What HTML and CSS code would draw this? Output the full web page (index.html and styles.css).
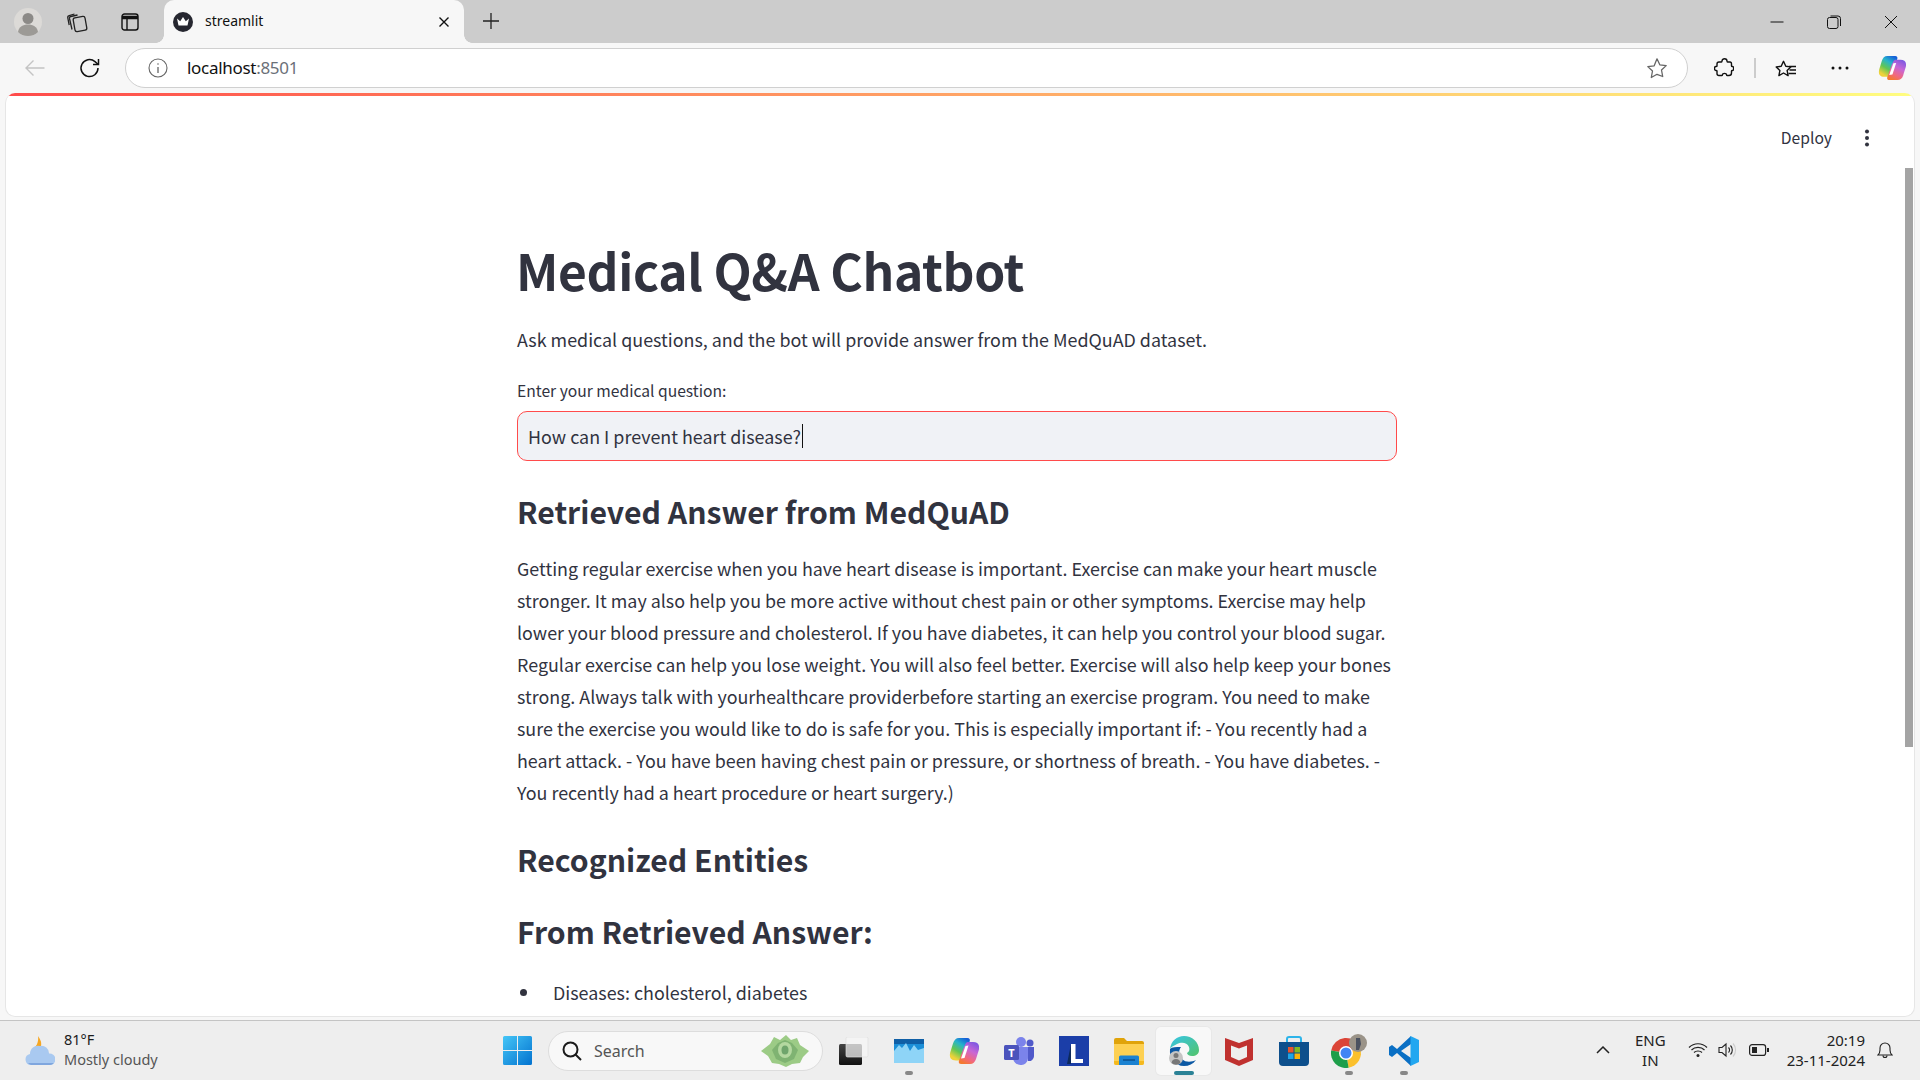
FILE: index.html
```html
<!DOCTYPE html>
<html lang="en">
<head>
<meta charset="utf-8">
<title>streamlit</title>
<link rel="stylesheet" href="styles.css">
</head>
<body>
<div class="tabstrip">
  <div class="strip-left">
    <span class="avatar"><svg width="28" height="28" viewBox="0 0 28 28"><circle cx="14" cy="14" r="14" fill="#dcdad7"/><circle cx="14" cy="10.5" r="5.5" fill="#8c8a87"/><path d="M4 24c1-5.500 5-7.500 10-7.500s9 2 10 7.500c-2.500 2.500-6 4-10 4s-7.500-1.500-10-4z" fill="#9c9a96"/></svg></span>
    <span class="strip-btn"><svg width="22" height="22" viewBox="0 0 22 22" fill="none" stroke="#222" stroke-width="1.300"><rect x="8" y="6" width="12" height="14" rx="2" transform="rotate(-10 14 13)"/><path d="M6 18.500 3.500 7.500c-.2-1 .3-1.800 1.300-2L11.500 4"/><path d="M3.200 14 1.800 7c-.2-1.200.4-2.100 1.400-2.300L8.500 3"/></svg></span>
    <span class="strip-btn"><svg width="18" height="18" viewBox="0 0 18 18" fill="none" stroke="#111" stroke-width="1.400"><rect x="1" y="1" width="16" height="16" rx="2.500"/><path d="M1 4.500h16" stroke-width="3.500"/><path d="M6 5v12"/></svg></span>
  </div>
  <div class="tab">
    <svg class="favicon" width="20" height="20" viewBox="0 0 20 20"><circle cx="10" cy="10" r="10" fill="#262730"/><path d="M4 6.500l3.200 2.700L10 5l2.800 4.200L16 6.500l-1.500 7h-9z" fill="#fff"/></svg>
    <span class="tab-title">streamlit</span>
    <svg class="tab-close" width="12" height="12" viewBox="0 0 12 12" stroke="#111" stroke-width="1.400"><path d="M1.500 1.500l9 9M10.500 1.500l-9 9"/></svg>
  </div>
  <svg class="new-tab" width="18" height="18" viewBox="0 0 18 18" stroke="#222" stroke-width="1.300"><path d="M9 1v16M1 9h16"/></svg>
  <div class="win-btns">
    <svg width="14" height="14" viewBox="0 0 14 14" stroke="#111" stroke-width="1"><path d="M0.500 7h13"/></svg>
    <svg width="14" height="14" viewBox="0 0 14 14" fill="none" stroke="#111" stroke-width="1"><rect x="0.500" y="2.500" width="10.500" height="11" rx="2"/><path d="M3.500 1h7.500a2.500 2.500 0 0 1 2.500 2.500V11"/></svg>
    <svg width="14" height="14" viewBox="0 0 14 14" stroke="#111" stroke-width="1"><path d="M1 1l12 12M13 1L1 13"/></svg>
  </div>
</div>

<div class="toolbar">
  <svg class="tb-back" width="20" height="18" viewBox="0 0 20 18" fill="none" stroke="#c4c4c4" stroke-width="1.400"><path d="M19.500 9H1M8.500 1.500 1 9l7.500 7.500"/></svg>
  <svg class="tb-reload" width="22" height="22" viewBox="0 0 22 22" fill="none" stroke="#111" stroke-width="1.500"><path d="M19 11a8.500 8.500 0 1 1-3-6.400l3 2.600"/><path d="M19.500 2v5.500H14"/></svg>
  <div class="address">
    <svg class="info" width="20" height="20" viewBox="0 0 20 20" fill="none" stroke="#666" stroke-width="1.100"><circle cx="10" cy="10" r="9"/><path d="M10 9v6" stroke-width="1.300"/><circle cx="10" cy="6" r=".8" fill="#666" stroke="none"/></svg>
    <span class="url">localhost<span class="port">:8501</span></span>
    <svg class="star" width="22" height="22" viewBox="0 0 22 22" fill="none" stroke="#666" stroke-width="1.300" stroke-linejoin="round"><path d="M11 1.800l2.800 6 6.400.8-4.700 4.400 1.200 6.500L11 17.300l-5.700 3.200 1.200-6.500-4.700-4.400 6.400-.8z"/></svg>
  </div>
  <svg class="tb-ext" width="20" height="20" viewBox="0 0 20 20" fill="none" stroke="#111" stroke-width="1.400" stroke-linejoin="round"><path d="M8 3c0-3 5-3 5 0 0 .7 0 1 .5 1H16c1 0 1.500 1 1.500 2v2c0 .5.500.5 1 .5 1.500 0 1.500 4 0 4-.5 0-1 0-1 .5v2c0 1.500-1 2.500-2.500 2.500h-2c-.5 0-.5-.5-.5-1 0-1.500-4-1.500-4 0 0 .5 0 1-.5 1H5c-1 0-2-1-2-2v-2.500c0-.5-.5-.5-1-.5-2 0-2-4 0-4 .5 0 1 0 1-.5V6c0-1 1-2 2-2h2.500C8 4 8 3.500 8 3z"/></svg>
  <span class="tb-divider"></span>
  <svg class="tb-fav" width="22" height="22" viewBox="0 0 22 22" fill="none" stroke="#111" stroke-width="1.400" stroke-linejoin="round"><path d="M9.500 1.800l2.300 5 5 .6-3.700 3.500 1 5.200-4.600-2.600-4.600 2.600 1-5.200L2.200 7.400l5-.6z" transform="translate(-1 2.500)"/><path d="M14 9.500h7M14.500 13h6.500M13.500 16.500H21"/></svg>
  <svg class="tb-more" width="18" height="4" viewBox="0 0 18 4" fill="#111"><circle cx="2" cy="2" r="1.500"/><circle cx="9" cy="2" r="1.500"/><circle cx="16" cy="2" r="1.500"/></svg>
  <svg class="tb-copilot" width="28" height="26" viewBox="0 0 30 28"><use href="#copilot"/></svg>
</div>

<main class="page">
  <div class="decoration"></div>
  <div class="st-header">
    <span class="deploy">Deploy</span>
    <svg class="kebab" width="6" height="18" viewBox="0 0 6 18" fill="#31333f"><circle cx="3" cy="2.500" r="2"/><circle cx="3" cy="9" r="2"/><circle cx="3" cy="15.500" r="2"/></svg>
  </div>
  <div class="scrollbar"></div>
  <div class="block">
    <h1>Medical Q&amp;A Chatbot</h1>
    <p class="desc">Ask medical questions, and the bot will provide answer from the MedQuAD dataset.</p>
    <label class="q-label" for="q">Enter your medical question:</label>
    <div class="q-input" id="q"><span>How can I prevent heart disease?</span><i class="caret"></i></div>
    <h2 class="h-answer">Retrieved Answer from MedQuAD</h2>
    <p class="answer">Getting regular exercise when you have heart disease is important. Exercise can make your heart muscle<br>stronger. It may also help you be more active without chest pain or other symptoms. Exercise may help<br>lower your blood pressure and cholesterol. If you have diabetes, it can help you control your blood sugar.<br>Regular exercise can help you lose weight. You will also feel better. Exercise will also help keep your bones<br>strong. Always talk with yourhealthcare providerbefore starting an exercise program. You need to make<br>sure the exercise you would like to do is safe for you. This is especially important if: - You recently had a<br>heart attack. - You have been having chest pain or pressure, or shortness of breath. - You have diabetes. -<br>You recently had a heart procedure or heart surgery.)</p>
    <h2 class="h-ent">Recognized Entities</h2>
    <h2 class="h-from">From Retrieved Answer:</h2>
    <ul class="ents"><li>Diseases: cholesterol, diabetes</li></ul>
  </div>
</main>

<footer class="taskbar">
  <div class="weather">
    <svg width="30" height="30" viewBox="0 0 30 30"><path d="M13 0c2 3 4 6 3 10-1 3-6 5-9 3 4-1 7-7 6-13z" fill="#f5a623"/><path d="M6 29a5.500 5.500 0 0 1-1-10.900A8 8 0 0 1 15 10a7.500 7.500 0 0 1 9 7.500 5.800 5.800 0 0 1 1.500 11.500z" fill="#a9c9f0"/><path d="M6 29a5.500 5.500 0 0 1-3-2h26a5.800 5.800 0 0 1-4 2z" fill="#7fa6de"/></svg>
    <div class="weather-text"><span>81°F</span><span class="muted">Mostly cloudy</span></div>
  </div>
  <svg class="win-logo" width="29" height="29" viewBox="0 0 29 29"><defs><linearGradient id="w" x1="0" y1="0" x2="1" y2="1"><stop offset="0" stop-color="#45c6f7"/><stop offset="1" stop-color="#0272cf"/></linearGradient></defs><path d="M0 1.500A1.500 1.500 0 0 1 1.500 0H14v14H0zM15 0h12.500A1.500 1.500 0 0 1 29 1.500V14H15zM0 15h14v14H1.500A1.500 1.500 0 0 1 0 27.500zM15 15h14v12.500a1.500 1.500 0 0 1-1.500 1.500H15z" fill="url(#w)"/></svg>
  <div class="search">
    <svg width="20" height="20" viewBox="0 0 20 20" fill="none" stroke="#1b1b1b" stroke-width="2"><circle cx="8.500" cy="8.500" r="7"/><path d="M13.500 13.500 19 19"/></svg>
    <span>Search</span>
    <svg class="flower" width="50" height="32" viewBox="0 0 50 32"><path d="M1 16 10 9l4-7 6 3 6-5 5 5 6-2 3 7 9 6-6 6-3 6-8 1-6 3-7-3-7-1-4-7z" fill="#9ccb86"/><path d="M12 15l6-7 7-3 7 3 6 7-4 9-9 4-9-4z" fill="#7fb372"/><ellipse cx="25" cy="15" rx="7" ry="8" fill="#b4d8a0"/><ellipse cx="25" cy="15" rx="3.500" ry="4.500" fill="#6fa56c"/></svg>
  </div>
  <div class="apps">
    <span class="app app-first"><svg width="30" height="28" viewBox="0 0 30 28"><defs><linearGradient id="d1" x1="0" y1="0" x2="0" y2="1"><stop offset="0" stop-color="#444"/><stop offset="1" stop-color="#111"/></linearGradient></defs><rect x="0" y="7" width="23" height="21" rx="1.500" fill="url(#d1)"/><rect x="7" y="0" width="22" height="20" rx="1.500" fill="#f6f6f6" fill-opacity=".72" stroke="#dedede" stroke-width=".7"/></svg></span>
    <span class="app running"><svg width="30" height="24" viewBox="0 0 30 24"><rect width="30" height="24" fill="#a8def7"/><rect width="30" height="15" fill="#1b8fd8"/><rect width="30" height="5" fill="#0f5fa6"/><path d="M0 12l5-6 3 3 4-5 4 8 4-6 4 5 6-2v15H0z" fill="#8ed4f7"/></svg></span>
    <span class="app"><svg width="30" height="28" viewBox="0 0 30 28"><defs><linearGradient id="c1" x1=".75" y1="0" x2=".2" y2="1"><stop offset="0" stop-color="#1560d8"/><stop offset=".3" stop-color="#26b4cc"/><stop offset=".6" stop-color="#62c653"/><stop offset=".9" stop-color="#efd23a"/></linearGradient><linearGradient id="c2" x1=".8" y1="0" x2=".3" y2="1"><stop offset="0" stop-color="#7a58e2"/><stop offset=".4" stop-color="#c866d6"/><stop offset=".75" stop-color="#f2687e"/><stop offset="1" stop-color="#f4792f"/></linearGradient></defs><g id="copilot"><path d="M10 1h8.500c2 0 2.800 1.500 2.200 3.200L16 17l-2.500 5c-.6 1-1.500 1.500-2.800 1.500H7C2 23.500 0 20.500 1.200 15.500L4 6.500C5 3 7 1 10 1z" fill="url(#c1)"/><path d="M21 27h-9c-2 0-2.600-1.500-2-3.200l5-13.800 2-4c.6-.8 1.400-1 2.500-1H24c5 0 7 3 5.800 8l-2.800 9c-1 3-3 5-6 5z" fill="url(#c2)"/><path d="M19.500 8.500l-3 .5-4.500 12.500 3.500-.5z" fill="#fff"/></g></svg></span>
    <span class="app"><svg width="30" height="28" viewBox="0 0 30 28"><circle cx="17" cy="5" r="5" fill="#7b83eb"/><circle cx="26" cy="6" r="3.500" fill="#5059c9"/><path d="M22 10h8v9a5 5 0 0 1-6 5z" fill="#5059c9"/><path d="M9 10h15v11a7 7 0 0 1-7.500 7A7.500 7.500 0 0 1 9 21z" fill="#7b83eb"/><rect y="8" width="15" height="15" rx="1.500" fill="#4b53bc"/><text x="7.500" y="20" class="teams-t">T</text></svg></span>
    <span class="app"><svg width="30" height="30" viewBox="0 0 30 30"><rect width="30" height="30" fill="#1b3ea8"/><path d="M8 28 12 8v20z" fill="#0d2a5c"/><path d="M12 8h4.500v15H24v4H12z" fill="#fff"/></svg></span>
    <span class="app"><svg width="30" height="28" viewBox="0 0 30 28"><path d="M0 3a2 2 0 0 1 2-2h8l3 3h15a2 2 0 0 1 2 2v4H0z" fill="#e0a30a"/><path d="M0 7h30v19a2 2 0 0 1-2 2H2a2 2 0 0 1-2-2z" fill="#fdd052"/><path d="M0 24h30v2a2 2 0 0 1-2 2H2a2 2 0 0 1-2-2z" fill="#f5b91e"/><path d="M5 20a1.500 1.500 0 0 1 1.500-1.500h17A1.500 1.500 0 0 1 25 20v8H5z" fill="#1b82d1"/><path d="M9 23h12" stroke="#0d4f8c" stroke-width="1.500"/></svg></span>
    <span class="app active"><svg width="30" height="30" viewBox="0 0 30 30"><defs><linearGradient id="e1" x1="0" y1="0" x2="1" y2="1"><stop offset="0" stop-color="#36c5e8"/><stop offset="1" stop-color="#53c46a"/></linearGradient></defs><path d="M1 13C2 5 8 0 15 0c8 0 15 6 15 14 0 4-3 6-7 6-3 0-5-2-5-3 2-1 3-3 2-6-2-5-8-5-12-3-3 1.500-6 3-7 5z" fill="url(#e1)"/><path d="M1 13c-1 9 5 17 14 17 5 0 9-2 12-6-4 2-10 3-14-1-3-3-4-8-1-12-5 0-9 0-11 2z" fill="#0c59a4"/><circle cx="7" cy="22" r="7" fill="#c4c4c4"/><circle cx="7" cy="19.500" r="2.500" fill="#777"/><path d="M2.500 27c.5-3 2-4 4.500-4s4 1 4.500 4a7 7 0 0 1-9 0z" fill="#777"/></svg></span>
    <span class="app"><svg width="28" height="30" viewBox="0 0 28 30"><path d="M0 2l14 5 14-5v22l-14 6-14-6z" fill="#c0312f"/><path d="M6 9.500l8 3 8-3v11.500l-8 3.500L6 21z" fill="#eee"/></svg></span>
    <span class="app"><svg width="30" height="30" viewBox="0 0 30 30"><path d="M8 6V3a2 2 0 0 1 2-2h10a2 2 0 0 1 2 2v3" fill="none" stroke="#2cb4ea" stroke-width="2"/><path d="M0 6h30v20a4 4 0 0 1-4 4H4a4 4 0 0 1-4-4z" fill="#0d4f8c"/><rect x="9" y="11" width="5.500" height="5.500" fill="#e8532b"/><rect x="15.500" y="11" width="5.500" height="5.500" fill="#7fb822"/><rect x="9" y="17.500" width="5.500" height="5.500" fill="#1fa5e6"/><rect x="15.500" y="17.500" width="5.500" height="5.500" fill="#fbb40a"/></svg></span>
    <span class="app running"><svg width="36" height="34" viewBox="0 0 36 34"><path d="M15 19L.2 16.400A15 15 0 0 1 29.100 13.900z" fill="#db4437"/><path d="M15 19l14.100-5.100A15 15 0 0 1 17.600 33.800z" fill="#fbc02d"/><path d="M15 19l2.600 14.800A15 15 0 0 1 .2 16.400z" fill="#1e9e4a"/><circle cx="15" cy="19" r="7" fill="#fff"/><circle cx="15" cy="19" r="5.500" fill="#4285f4"/><circle cx="27" cy="9" r="9" fill="#9a9388"/><path d="M25 4h4l1 6-2 6h-3z" fill="#4a5160"/></svg></span>
    <span class="app running"><svg width="30" height="30" viewBox="0 0 30 30"><path d="M22 0 8 13 3 9 0 11v8l3 2 5-4 14 13v-8l-10-7 10-7z" fill="#0a6fc4"/><path d="M21.500 0 30 4v22l-8.500 4z" fill="#22a7f0"/></svg></span>
  </div>
  <div class="tray">
    <svg width="14" height="8" viewBox="0 0 14 8" fill="none" stroke="#222" stroke-width="1.500"><path d="M1 7l6-6 6 6"/></svg>
    <div class="lang"><span>ENG</span><span>IN</span></div>
    <svg class="wifi" width="20" height="16" viewBox="0 0 20 16" fill="none" stroke="#222" stroke-width="1.200"><path d="M1 5.500c5-5 13-5 18 0M3.500 8c3.500-3.500 9.500-3.500 13 0M6 10.500c2-2 6-2 8 0"/><circle cx="10" cy="13.500" r="1.500" fill="#222" stroke="none"/></svg>
    <svg class="speaker" width="20" height="16" viewBox="0 0 20 16" fill="none" stroke="#222" stroke-width="1.100"><path d="M1 5.500h3L8 2v12l-4-3.500H1z"/><path d="M10.500 5.500a3.500 3.500 0 0 1 0 5M12.500 3.500a6.500 6.500 0 0 1 0 9"/><path d="M15 1.500a9.500 9.500 0 0 1 0 13" stroke="#ccc"/></svg>
    <svg class="battery" width="20" height="12" viewBox="0 0 20 12" fill="none" stroke="#222" stroke-width="1.200"><rect x=".6" y=".6" width="16" height="10.800" rx="2.500"/><rect x="3" y="3" width="5" height="6" fill="#222" stroke="none"/><rect x="18" y="4" width="2" height="4" fill="#222" stroke="none"/></svg>
    <div class="clock"><span>20:19</span><span>23-11-2024</span></div>
    <svg class="bell" width="16" height="18" viewBox="0 0 16 18" fill="none" stroke="#222" stroke-width="1.100"><path d="M1 14c1.500-1.500 2-3 2-5V7a5 5 0 0 1 10 0v2c0 2 .5 3.500 2 5z"/><path d="M6 14.500a2 2 0 0 0 4 0"/></svg>
  </div>
</footer>
</body>
</html>
```
FILE: styles.css
```css
* { box-sizing: border-box; }
html, body { margin: 0; padding: 0; width: 1920px; height: 1080px; overflow: hidden; }
body { display: flex; flex-direction: column; background: #f7f7f7; font-family: "Open Sans", "Noto Sans", sans-serif; color: #1b1b1b; }
svg { display: block; flex: none; }

/* Tab strip */
.tabstrip { height: 43px; flex: none; background: #cccccc; display: flex; align-items: center; }
.strip-left { width: 164px; flex: none; display: flex; align-items: center; padding-left: 14px; }
.avatar { width: 28px; height: 28px; }
.strip-btn { width: 22px; height: 22px; display: flex; align-items: center; justify-content: center; }
.avatar + .strip-btn { margin-left: 24px; }
.strip-btn + .strip-btn { margin-left: 31px; }
.tab { position: relative; width: 300px; height: 43px; background: #f7f7f7; border-radius: 10px 10px 0 0; display: flex; align-items: center; padding-left: 9px; padding-right: 14px; }
.tab::before, .tab::after { content: ""; position: absolute; bottom: 0; width: 8px; height: 8px; }
.tab::before { left: -8px; background: radial-gradient(circle at 0 0, transparent 7.500px, #f7f7f7 8px); }
.tab::after { right: -8px; background: radial-gradient(circle at 100% 0, transparent 7.500px, #f7f7f7 8px); }
.tab-title { margin-left: 12px; font-size: 14px; line-height: 20px; margin-top: -2px; color: #111; flex: 1; font-family: "Noto Sans", sans-serif; }
.new-tab { margin-left: 18px; margin-top: -1px; }
.win-btns { margin-left: auto; display: flex; align-items: center; gap: 43px; padding-right: 22px; }

/* Toolbar */
.toolbar { height: 50px; flex: none; background: #f7f7f7; display: flex; align-items: center; padding-bottom: 1px; }
.tb-back { margin-left: 25px; }
.tb-reload { margin-left: 34px; }
.address { width: 1563px; height: 40px; margin-left: 24px; background: #fff; border: 1px solid #d0d0d0; border-radius: 20px; display: flex; align-items: center; padding-left: 22px; padding-right: 19px; }
.url { margin-left: 19px; font-size: 17px; color: #111; flex: 1; font-family: "Noto Sans", sans-serif; letter-spacing: -.3px; }
.port { color: #6b7078; }
.tb-ext { margin-left: 26px; }
.tb-divider { width: 2px; height: 20px; background: #ccc; margin-left: 20px; }
.tb-fav { margin-left: 19px; }
.tb-more { margin-left: 34px; }
.tb-copilot { margin-left: 29px; }

/* Streamlit page */
.page { position: relative; height: 924px; flex: none; margin: 0 5px; background: #fff; border-radius: 10px; border: 1px solid #e6e6e6; border-top: 0; overflow: hidden; font-family: "Noto Sans CJK JP", "Noto Sans", sans-serif; color: #31333f; }
.decoration { height: 3px; background: linear-gradient(90deg, #ff4b4b, #fffd80); }
.st-header { height: 84px; display: flex; align-items: center; justify-content: flex-end; padding-right: 44px; }
.deploy { font-size: 15.650px; line-height: 24px; }
.kebab { margin-left: 32px; }
.scrollbar { position: absolute; right: 1px; top: 75px; width: 8px; height: 579px; background: #a4a4a4; }
.block { width: 880px; margin: 0 auto 0 511px; }
h1 { margin: 50px 0 0 -1px; font-size: 49.700px; line-height: 78px; font-weight: 700; letter-spacing: -.35px; }
.desc { margin: 15px 0 0; font-size: 17.900px; line-height: 32px; }
.q-label { display: block; margin-top: 24px; font-size: 15.650px; line-height: 24px; }
.q-input { margin-top: 8px; height: 50px; background: #f0f2f6; border: 1px solid #ff4b4b; border-radius: 10px; display: flex; align-items: center; padding-left: 10px; font-size: 17.900px; }
.caret { width: 1px; height: 24px; background: #111; margin-left: 1px; }
h2 { margin: 0; font-size: 30.200px; line-height: 44px; font-weight: 700; }
.h-answer { margin-top: 28px; }
.answer { margin: 19px 0 0; font-size: 17.900px; line-height: 32px; white-space: nowrap; }
.h-ent { margin-top: 29px; }
.h-from { margin-top: 28px; }
.ents { list-style: none; margin: 23px 0 0; padding: 0; font-size: 17.900px; line-height: 32px; }
.ents li { display: flex; align-items: center; }
.ents li::before { content: ""; width: 7px; height: 7px; border-radius: 50%; background: #31333f; margin-left: 3px; margin-right: 26px; }

/* Taskbar */
.taskbar { height: 60px; flex: none; margin-top: 3px; background: #eeeeee; border-top: 1px solid #c4c4c4; display: flex; align-items: center; padding-left: 25px; }
.weather { width: 478px; flex: none; display: flex; align-items: center; gap: 9px; font-size: 14.500px; line-height: 20px; font-family: "Noto Sans", sans-serif; }
.weather-text { display: flex; flex-direction: column; margin-top: -3px; }
.muted { color: #555; }
.search { width: 275px; height: 40px; margin-left: 16px; flex: none; background: #f8f8f8; border: 1px solid #ddd; border-radius: 20px; display: flex; align-items: center; padding-left: 13px; padding-right: 12px; font-size: 16px; color: #555; gap: 12px; font-family: "Noto Sans", sans-serif; }
.flower { margin-left: auto; }
.apps { display: flex; align-items: center; margin-left: 16px; }
.app { position: relative; width: 55px; height: 48px; display: flex; align-items: center; justify-content: center; }
.app-first { width: 30px; margin-right: 12px; }
.app.running::after, .app.active::after { content: ""; position: absolute; left: 50%; bottom: 0; width: 8px; height: 4px; margin-left: -4px; border-radius: 2px; background: #888; }
.app.active { background: #f8f8f8; border-radius: 5px; box-shadow: 0 0 0 1px #e8e8e8; }
.app.active::after { width: 20px; margin-left: -10px; background: #2b8296; }
.teams-t { fill: #fff; font: 700 11px "Noto Sans", sans-serif; text-anchor: middle; }
.tray { margin-left: auto; display: flex; align-items: center; padding-right: 27px; font-family: "Noto Sans", sans-serif; font-size: 15px; line-height: 20px; margin-top: -1px; color: #222; }
.lang { display: flex; flex-direction: column; align-items: center; margin-left: 25px; }
.wifi { margin-left: 22px; }
.speaker { margin-left: 10px; }
.battery { margin-left: 11px; }
.clock { display: flex; flex-direction: column; align-items: flex-end; margin-left: 18px; }
.bell { margin-left: 12px; }
```
